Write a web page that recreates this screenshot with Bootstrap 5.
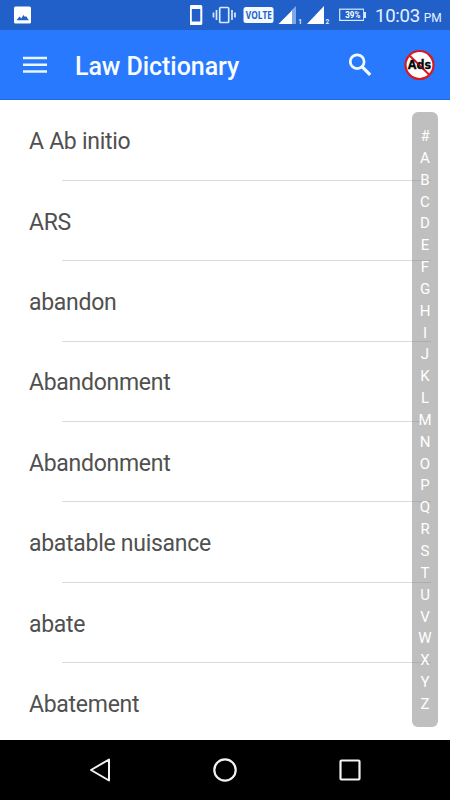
<!DOCTYPE html>
<html lang="en">
<head>
<meta charset="utf-8">
<meta name="viewport" content="width=device-width, initial-scale=1">
<title>Law Dictionary</title>
<link href="https://cdn.jsdelivr.net/npm/bootstrap@5.3.0/dist/css/bootstrap.min.css" rel="stylesheet">
<style>
  body { font-family: Roboto, "Liberation Sans", sans-serif; color: #505050; background: #fff; }
  svg { display: block; flex: none; }
  .screen { width: 450px; height: 800px; }
  .status-bar { height: 30px; background: #2160c9; color: #e4f2ff; padding-left: 14px; padding-right: 10px; }
  .clock { font-size: 18.6px; letter-spacing: -.3px; line-height: 30px; margin-left: 9px; padding-top: 3px; width: 65px; white-space: nowrap; }
  .clock small { font-size: 12px; margin-left: -.5px; letter-spacing: 0; }
  .app-bar { height: 70px; background: #2979ff; border-bottom: 1px solid #2468dc; padding: 1px 15px 0 23px; }
  .app-title { font-size: 25px; letter-spacing: -.06px; font-weight: 500; line-height: 30px; margin-left: 28px; padding-top: 4px; color: #fafdff; }
  .word-list { --bs-list-group-bg: transparent; padding-top: .6px; }
  .word { height: 80.38px; padding-left: 29px; font-size: 23px; letter-spacing: -.28px; line-height: 30px; }
  .word-text { height: 79.38px; padding-top: 4px; }
  .rule { height: 1px; margin-left: 33px; margin-right: 19px; background: #dadada; }
  .index-bar { top: 12.4px; right: 12px; width: 26px; height: 615px; padding: 13.600px 0 11px; border-radius: 6px; background: rgba(128,128,128,.5); color: #fff; font-size: 15px; }
  .index-bar span { height: 21.85px; line-height: 21.85px; }
  .nav-keys { height: 60px; background: #000; padding: 0 88px; }
</style>
</head>
<body>
<div class="screen d-flex flex-column overflow-hidden">
  <header>
    <div class="status-bar d-flex align-items-center">
      <svg class="me-auto" width="17" height="30" viewBox="0 0 17 30"><rect y="6.6" width="17" height="16.8" rx="1.5" fill="#fff"/><path d="M2.500 20.300 5.500 16.500l1.800 2 2-3.500 1.700 2 1-1 2.800 4.300z" fill="#2160c9"/></svg>
      <svg width="174" height="30" viewBox="190 0 174 30">
        <path fill="#fff" fill-rule="evenodd" d="M191.300 5h9.500q1.500 0 1.500 1.500v17q0 1.500-1.500 1.500h-9.500q-1.500 0-1.500-1.500v-17q0-1.500 1.500-1.500zM191.800 9v12.500h8.500V9z"/>
        <g fill="none" stroke="#d8eaff" stroke-width="1.700"><rect x="219.700" y="7.500" width="9" height="15" rx="1"/><path d="M216.500 10v10M213.500 12.500v5M232 10v10M235 12.500v5"/></g>
        <rect x="243.500" y="7" width="30" height="16" rx="2.500" fill="#f4faff"/>
        <text x="245.800" y="18.800" font-family="Open Sans, sans-serif" font-weight="700" font-size="10" textLength="26" lengthAdjust="spacingAndGlyphs" fill="#2160c9">VOLTE</text>
        <path d="M296 6v18h-5V10.800z" fill="#7ea8e8"/><path d="M278.500 24 292 10.500V24zM307 24l17-18v18z" fill="#fff"/>
        <text x="298.200" y="23.500" font-size="6.500" font-weight="700" fill="#e4f2ff">1</text>
        <text x="325.500" y="23.500" font-size="6.500" font-weight="700" fill="#e4f2ff">2</text>
        <rect x="339.700" y="9.200" width="24" height="11.200" fill="none" stroke="#d8eaff" stroke-width="1.200"/>
        <text x="345.300" y="18" font-size="8.200" font-weight="700" fill="#fff" textLength="15" lengthAdjust="spacingAndGlyphs">39%</text>
      </svg>
      <svg width="2" height="30" viewBox="0 0 2 30"><path d="M1 12v6" stroke="#d8eaff" stroke-width="2"/></svg>
      <div class="clock">10:03 <small>PM</small></div>
    </div>
    <nav class="app-bar d-flex align-items-center">
      <svg width="24" height="18" viewBox="0 0 24 18" role="img" aria-label="Menu"><path d="M0 1.900h24M0 8.700h24M0 15.500h24" stroke="#e9f8ff" stroke-width="2.500"/></svg>
      <div class="app-title me-auto">Law Dictionary</div>
      <svg width="24" height="24" viewBox="0 0 24 24" role="img" aria-label="Search"><circle cx="8.200" cy="8.700" r="6.900" fill="none" stroke="#f1faff" stroke-width="2.700"/><path d="m13.200 13.800 8 8" stroke="#f1faff" stroke-width="3.200"/></svg>
      <svg width="62" height="32" viewBox="0 0 62 32" role="img" aria-label="Remove ads">
        <circle cx="46.500" cy="16" r="14" fill="#fff" stroke="#d71920" stroke-width="2.200"/>
        <path d="m37 7 19 18.500" stroke="#d71920" stroke-width="2"/>
        <text x="34.800" y="20.300" font-family="DejaVu Sans, sans-serif" font-weight="700" font-size="11.500" textLength="23.500" lengthAdjust="spacingAndGlyphs" fill="#080808" stroke="#080808" stroke-width=".3">Ads</text>
        <path d="m41.500 11.400 10 9.700" stroke="#a51920" stroke-width="1"/>
      </svg>
    </nav>
  </header>
  <main class="position-relative flex-grow-1 overflow-hidden">
    <div class="word-list list-group list-group-flush">
      <div class="word"><div class="word-text d-flex align-items-center">A Ab initio</div><div class="rule"></div></div>
      <div class="word"><div class="word-text d-flex align-items-center">ARS</div><div class="rule"></div></div>
      <div class="word"><div class="word-text d-flex align-items-center">abandon</div><div class="rule"></div></div>
      <div class="word"><div class="word-text d-flex align-items-center">Abandonment</div><div class="rule"></div></div>
      <div class="word"><div class="word-text d-flex align-items-center">Abandonment</div><div class="rule"></div></div>
      <div class="word"><div class="word-text d-flex align-items-center">abatable nuisance</div><div class="rule"></div></div>
      <div class="word"><div class="word-text d-flex align-items-center">abate</div><div class="rule"></div></div>
      <div class="word"><div class="word-text d-flex align-items-center">Abatement</div></div>
    </div>
    <div class="index-bar position-absolute d-flex flex-column text-center">
      <span>#</span><span>A</span><span>B</span><span>C</span><span>D</span><span>E</span><span>F</span><span>G</span><span>H</span><span>I</span><span>J</span><span>K</span><span>L</span><span>M</span><span>N</span><span>O</span><span>P</span><span>Q</span><span>R</span><span>S</span><span>T</span><span>U</span><span>V</span><span>W</span><span>X</span><span>Y</span><span>Z</span>
    </div>
  </main>
  <footer class="nav-keys d-flex justify-content-between align-items-center">
    <svg width="24" height="26" viewBox="0 0 24 26"><path d="M21 2.500v21L3 13z" fill="none" stroke="#f2f2f2" stroke-width="2" stroke-linejoin="round"/></svg>
    <svg width="26" height="26" viewBox="0 0 26 26"><circle cx="13" cy="13" r="10.700" fill="none" stroke="#f2f2f2" stroke-width="2.200"/></svg>
    <svg width="24" height="26" viewBox="0 0 24 26"><rect x="2.500" y="3.500" width="19" height="19" rx="1" fill="none" stroke="#f2f2f2" stroke-width="2.200"/></svg>
  </footer>
</div>
<script src="https://cdn.jsdelivr.net/npm/bootstrap@5.3.0/dist/js/bootstrap.bundle.min.js"></script>
</body>
</html>
